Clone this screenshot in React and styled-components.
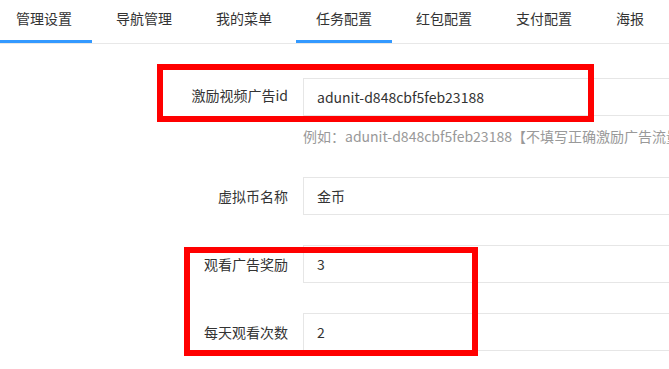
import React from "react"
import styled, { createGlobalStyle } from "styled-components"

const GlobalStyle = createGlobalStyle`
  html, body {
    margin: 0;
    background: #fff;
    overflow: hidden;
  }
  body {
    font-family: "Noto Sans CJK SC", "Noto Sans", sans-serif;
    font-size: 14px;
    color: #333;
  }
`

const Page = styled.div`
  position: relative;
  width: 669px;
  height: 369px;
  overflow: hidden;
`

const TabBar = styled.ul`
  display: flex;
  gap: 4px;
  margin: 0 0 0 -4px;
  padding: 0;
  list-style: none;
  height: 43px;
  border-bottom: 1px solid #e8e8e8;
  white-space: nowrap;
`

const Tab = styled.li`
  position: relative;
  flex: none;
  padding: 0 20px;
  height: 43px;
  line-height: 37px;
  font-size: 14px;
  color: #333;

  &::after {
    content: "";
    position: absolute;
    left: 0;
    right: 0;
    bottom: 0;
    height: 3px;
    background: ${(props) => (props.$active ? "#3399ff" : "transparent")};
  }
`

const Form = styled.div`
  padding-top: 34px;
`

const FormItem = styled.div`
  display: flex;
  align-items: flex-start;
  margin-bottom: 30px;
`

const Label = styled.label`
  flex: none;
  box-sizing: border-box;
  width: 303px;
  padding-right: 15px;
  text-align: right;
  line-height: ${(props) => (props.$raised ? "34px" : "38px")};
  font-size: 14px;
  color: #333;
`

const Field = styled.div`
  flex: none;
  width: 420px;
`

const Input = styled.div`
  box-sizing: border-box;
  height: 38px;
  line-height: 36px;
  border: 1px solid #e6e6e6;
  padding-left: 13px;
  font-size: 14px;
  color: #333;
  white-space: nowrap;
`

const Hint = styled.div`
  padding-top: 10px;
  line-height: 21px;
  font-size: 14px;
  color: #999;
  white-space: nowrap;
`

const Mark = styled.div`
  position: absolute;
  box-sizing: border-box;
  border: 6px solid #ff0000;
  pointer-events: none;
`

const tabs = ["管理设置", "导航管理", "我的菜单", "任务配置", "红包配置", "支付配置", "海报"]
const activeTabs = [0, 3]

export default function App() {
  return (
    <Page>
      <GlobalStyle />
      <TabBar>
        {tabs.map((t, i) => (
          <Tab key={t} $active={activeTabs.includes(i)}>
            {t}
          </Tab>
        ))}
      </TabBar>
      <Form>
        <FormItem>
          <Label $raised>激励视频广告id</Label>
          <Field>
            <Input>adunit-d848cbf5feb23188</Input>
            <Hint>例如：adunit-d848cbf5feb23188【不填写正确激励广告流量主将无法获得收益】</Hint>
          </Field>
        </FormItem>
        <FormItem>
          <Label>虚拟币名称</Label>
          <Field>
            <Input>金币</Input>
          </Field>
        </FormItem>
        <FormItem>
          <Label>观看广告奖励</Label>
          <Field>
            <Input>3</Input>
          </Field>
        </FormItem>
        <FormItem>
          <Label>每天观看次数</Label>
          <Field>
            <Input>2</Input>
          </Field>
        </FormItem>
      </Form>
      <Mark style={{ left: 157, top: 64, width: 437, height: 58 }} />
      <Mark style={{ left: 184, top: 247, width: 294, height: 109 }} />
    </Page>
  )
}
